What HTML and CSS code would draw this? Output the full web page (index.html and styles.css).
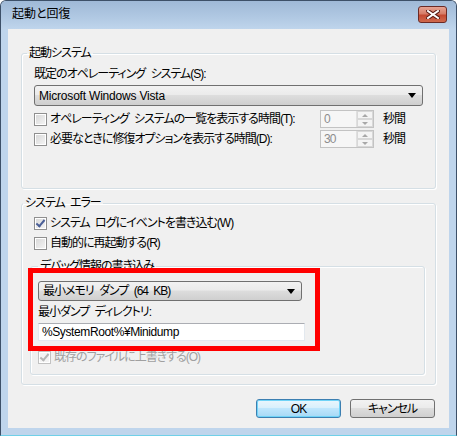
FILE: index.html
```html
<!DOCTYPE html>
<html lang="ja">
<head>
  <meta charset="UTF-8">
  <title>起動と回復</title>
  <link rel="stylesheet" href="styles.css">
</head>
<body>
  <div class="window">
    <div class="titlebar">
      <span class="title">起動と回復</span>
      <span class="close">
        <svg width="14" height="9" viewBox="0 0 14 9">
          <path d="M2 1 L12 8 M12 1 L2 8" stroke="#5a1c16" stroke-width="4" stroke-linecap="square"/>
          <path d="M2 1 L12 8 M12 1 L2 8" stroke="#ffffff" stroke-width="2" stroke-linecap="square"/>
        </svg>
      </span>
    </div>

    <div class="client">
      <fieldset class="group group-startup">
        <legend>起動システム</legend>
        <div class="label">既定のオペレーティング システム(S):</div>
        <div class="combo">
          <span class="combo-text combo-latin">Microsoft Windows Vista</span>
          <span class="arrow"></span>
        </div>
        <div class="row row-first">
          <span class="check"></span>
          <span class="row-label">オペレーティング システムの一覧を表示する時間(T):</span>
          <span class="spin"><span class="spin-value">0</span><span class="spin-btns"><i class="up"></i><i class="down"></i></span></span>
          <span class="unit">秒間</span>
        </div>
        <div class="row">
          <span class="check"></span>
          <span class="row-label">必要なときに修復オプションを表示する時間(D):</span>
          <span class="spin"><span class="spin-value">30</span><span class="spin-btns"><i class="up"></i><i class="down"></i></span></span>
          <span class="unit">秒間</span>
        </div>
      </fieldset>

      <fieldset class="group group-error">
        <legend>システム エラー</legend>
        <div class="row row-indent">
          <span class="check checked"></span>
          <span class="row-label">システム ログにイベントを書き込む(W)</span>
        </div>
        <div class="row row-indent">
          <span class="check"></span>
          <span class="row-label">自動的に再起動する(R)</span>
        </div>

        <fieldset class="group group-debug">
          <legend>デバッグ情報の書き込み</legend>
          <div class="combo combo-dump">
            <span class="combo-text">最小メモリ ダンプ (64 KB)</span>
            <span class="arrow"></span>
          </div>
          <div class="label label-dir">最小ダンプ ディレクトリ:</div>
          <div class="textbox">%SystemRoot%¥Minidump</div>
          <div class="row row-overwrite disabled">
            <span class="check checked"></span>
            <span class="row-label">既存のファイルに上書きする(O)</span>
          </div>
        </fieldset>
      </fieldset>

      <div class="buttons">
        <button class="btn btn-default">OK</button>
        <button class="btn">キャンセル</button>
      </div>
    </div>

    <div class="annotation"></div>
  </div>
</body>
</html>
```

FILE: styles.css
```css
body {
  margin: 0;
  font-family: "Liberation Sans", "Noto Sans CJK JP", sans-serif;
  font-size: 12px;
  font-feature-settings: "palt";
  letter-spacing: -1px;
  word-spacing: 3px;
  color: #000;
  background: #fff;
}

.window {
  position: relative;
  width: 457px;
  height: 436px;
  box-sizing: border-box;
  border: 1px solid #3d5068;
  border-bottom-color: #6fd0e8;
  border-radius: 6px 6px 0 0;
  padding: 0 7px 7px 7px;
  background: #bfd5ec;
}

.titlebar {
  height: 28px;
  margin: 0 -7px;
  padding: 0 9px 0 11px;
  display: flex;
  align-items: center;
  justify-content: space-between;
  border-radius: 5px 5px 0 0;
  background: linear-gradient(#9fb9d7, #b1c9e3 60%, #bfd5ec);
}

.title {
  font-size: 12px;
  letter-spacing: 0;
  line-height: 16px;
  margin-top: -2px;
}

.close {
  width: 27px;
  height: 15px;
  margin-top: -2px;
  display: flex;
  align-items: center;
  justify-content: center;
  border: 1px solid #6b2a25;
  border-radius: 3px;
  background: linear-gradient(#e6a393, #d67d68 45%, #c44a32 55%, #cf6a4e);
}

.client {
  height: 399px;
  box-sizing: border-box;
  padding: 17px 13px 0 13px;
  background: #f0f0f0;
}

.group {
  margin: 0;
  min-width: 0;
  border: 1px solid #d5dfe5;
  border-radius: 3px;
  box-shadow: inset 1px 1px 0 #fff, 1px 1px 0 #fff;
}

.group legend {
  padding: 0 2px;
  margin-left: -7px;
  line-height: 14px;
}

.group-startup {
  padding: 7px 12px 39px 12px;
}

.group-error {
  margin-top: 7px;
  padding: 3px 10px 9px 8px;
}

.group-debug {
  margin-top: 6px;
  padding: 8px 12px 7px 7px;
}

.group-debug legend {
  margin-left: 0;
}

.label {
  line-height: 14px;
}

.combo {
  position: relative;
  height: 21px;
  margin-top: 4px;
  box-sizing: border-box;
  display: flex;
  align-items: center;
  padding-left: 4px;
  border: 1px solid #707070;
  border-radius: 3px;
  background: linear-gradient(#f2f2f2, #ebebeb 45%, #dddddd 50%, #cfcfcf);
}

.combo-text {
  line-height: 14px;
}

.combo-latin {
  letter-spacing: -0.2px;
  word-spacing: 0;
}

.arrow {
  position: absolute;
  right: 6px;
  top: 7px;
  border-left: 4px solid transparent;
  border-right: 4px solid transparent;
  border-top: 5px solid #000;
}

.combo-dump {
  width: 264px;
  height: 20px;
  margin-top: 0;
}

.row {
  height: 20px;
  display: flex;
  align-items: center;
}

.row-first {
  margin-top: 3px;
}

.row-indent {
  margin-left: 4px;
}

.check {
  width: 11px;
  height: 11px;
  flex: none;
  border: 1px solid #8f8f8f;
  background: linear-gradient(135deg, #d6d6d6, #f6f6f6);
  box-shadow: inset 0 0 0 1px #fff;
  position: relative;
}

.check.checked::after {
  content: "";
  position: absolute;
  left: 3px;
  top: 0;
  width: 3px;
  height: 7px;
  border: solid #4a5f97;
  border-width: 0 2px 2px 0;
  transform: rotate(40deg);
}

.row-label {
  flex: 1 1 0;
  min-width: 0;
  margin-left: 3px;
  line-height: 14px;
  white-space: nowrap;
}

.spin {
  width: 54px;
  height: 18px;
  flex: none;
  box-sizing: border-box;
  display: flex;
  border: 1px solid #c3c3c3;
  background: #f6f6f6;
}

.spin-value {
  flex: 1;
  padding-left: 3px;
  line-height: 16px;
  color: #8d8d8d;
}

.spin-btns {
  width: 16px;
  display: flex;
  flex-direction: column;
  border-left: 1px solid #e0e0e0;
}

.spin-btns i {
  flex: 1;
  position: relative;
  border: 1px solid #d8d8d8;
  background: #f4f4f4;
}

.spin-btns i::after {
  content: "";
  position: absolute;
  left: 4px;
  top: 2px;
  border-left: 3px solid transparent;
  border-right: 3px solid transparent;
}

.spin-btns .up::after {
  border-bottom: 3px solid #a8a8a8;
}

.spin-btns .down::after {
  border-top: 3px solid #a8a8a8;
}

.unit {
  width: 40px;
  flex: none;
  margin-left: 9px;
  line-height: 14px;
}

.label-dir {
  margin-top: 4px;
}

.textbox {
  width: 267px;
  height: 18px;
  margin-top: 4px;
  box-sizing: border-box;
  padding-left: 3px;
  line-height: 16px;
  letter-spacing: -0.4px;
  border: 1px solid #e3e9ef;
  border-top-color: #abadb3;
  background: #fff;
}

.row-overwrite {
  margin-top: 6px;
}

.disabled {
  color: #a0a0a0;
}

.disabled .check {
  border-color: #c2c2c2;
  background: #f4f4f4;
}

.disabled .check.checked::after {
  border-color: #b5b5b5;
}

.buttons {
  margin-top: 14px;
  display: flex;
  justify-content: flex-end;
  gap: 9px;
  padding-right: 1px;
}

.btn {
  width: 85px;
  height: 19px;
  padding: 0;
  font-family: inherit;
  font-size: 12px;
  font-feature-settings: "palt";
  letter-spacing: -1px;
  line-height: 14px;
  border: 1px solid #707070;
  border-radius: 3px;
  background: linear-gradient(#f2f2f2, #ebebeb 45%, #dddddd 50%, #cfcfcf);
}

.btn-default {
  border-color: #3c7fb1;
  box-shadow: inset 0 0 0 1px #6fd3f7;
  background: linear-gradient(#eaf6fd, #d9f0fc 45%, #bee6fd 50%, #a7d9f5);
}

.annotation {
  position: absolute;
  left: 27px;
  top: 267px;
  width: 282px;
  height: 73px;
  border: 5px solid #ff0000;
}
```
